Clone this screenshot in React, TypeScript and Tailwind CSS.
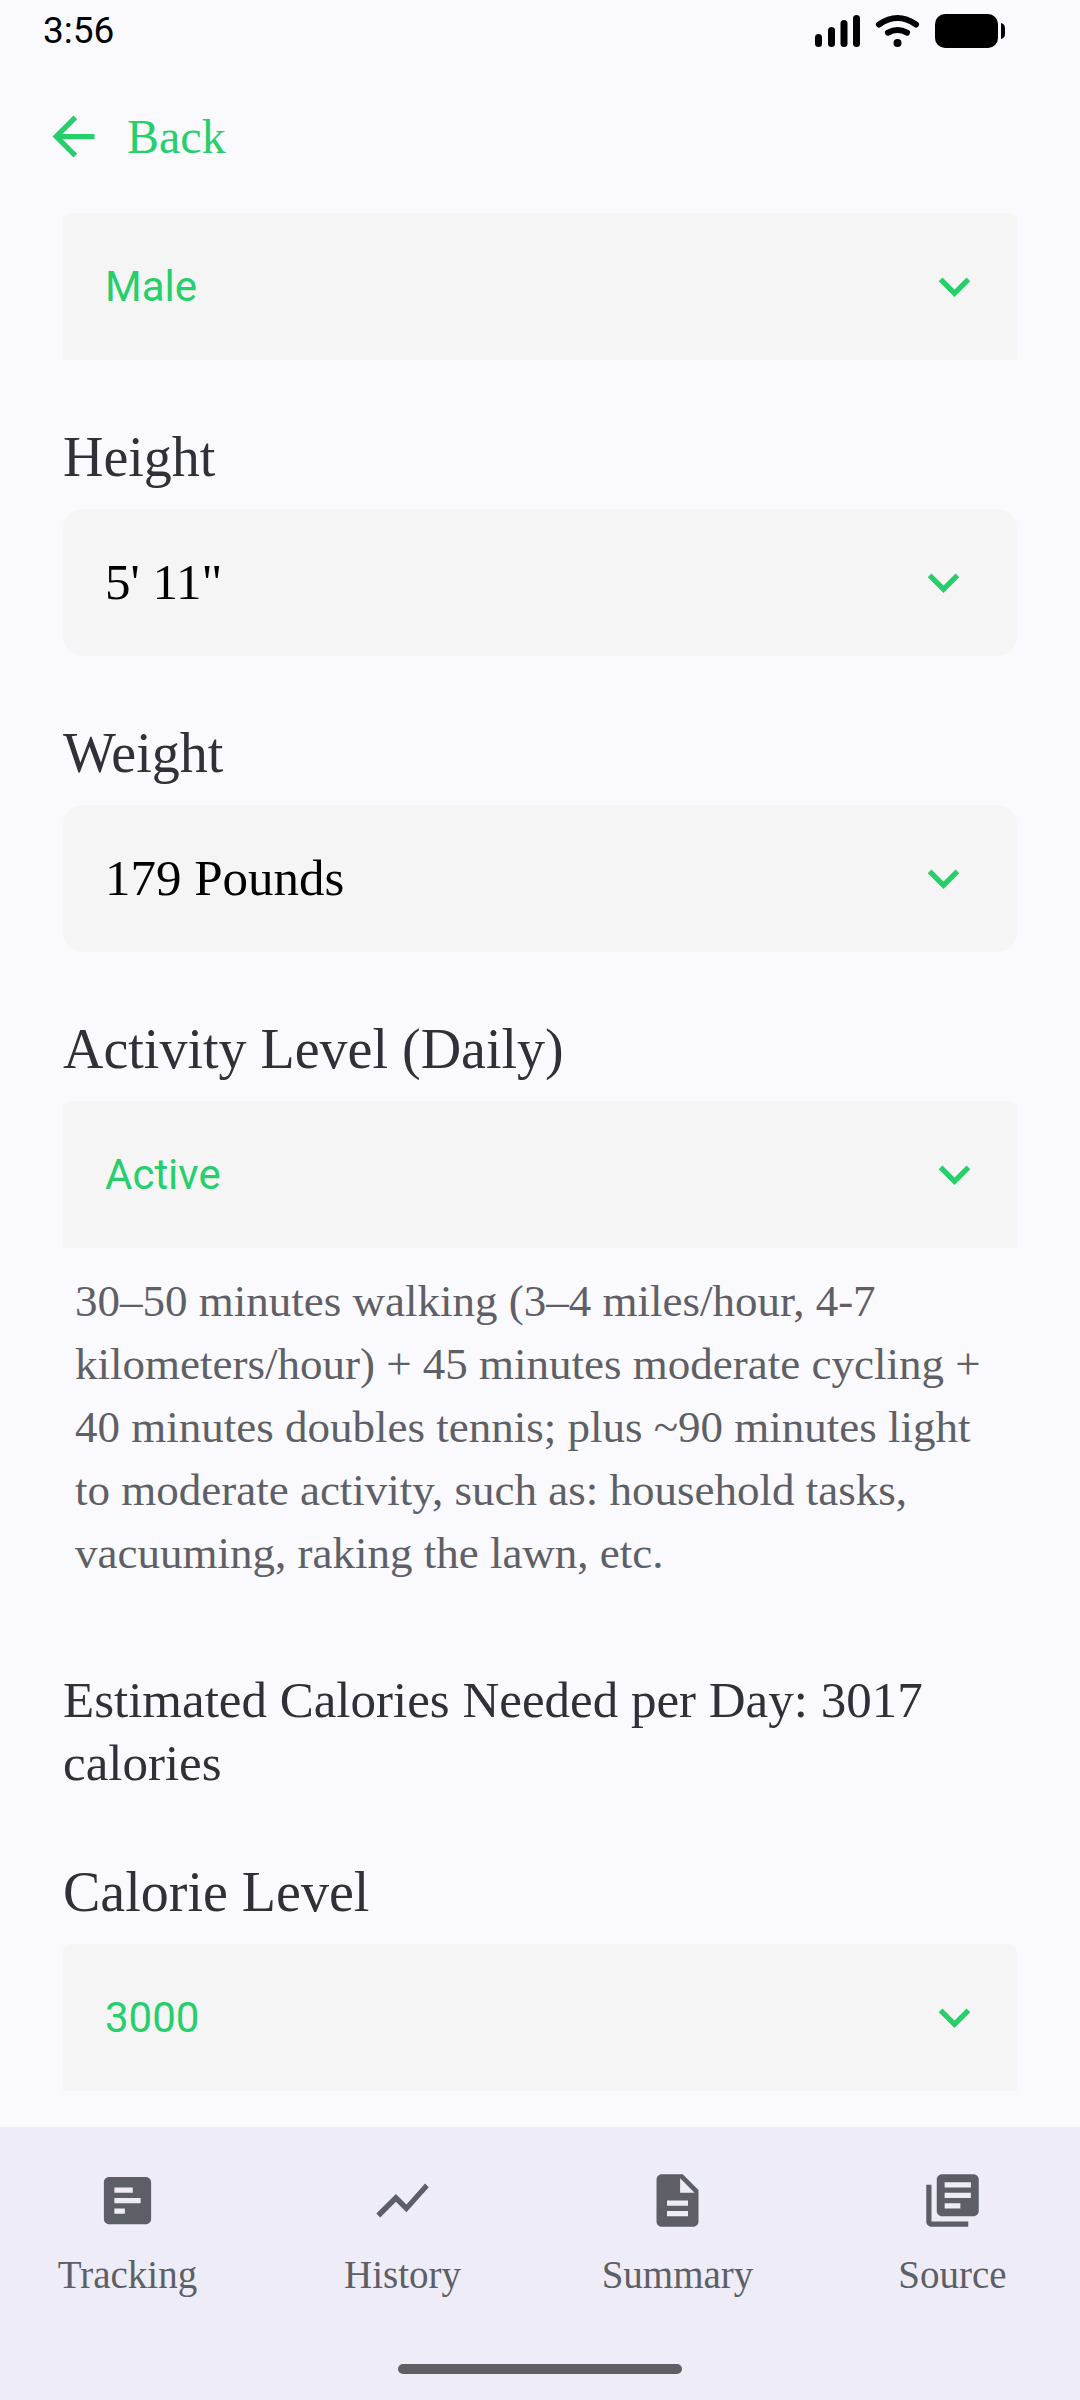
import { useId, useState } from 'react'
import {
  MdArrowBack,
  MdExpandMore,
  MdShowChart,
  MdDescription,
  MdLibraryBooks
} from 'react-icons/md'
import clsx from 'clsx'

const StatusBar = () => {
  return (
    <div className="flex h-[62px] items-center justify-between pl-[43px] pr-[74px] font-['Roboto',sans-serif] text-[37px] leading-[44px] text-black">
      <span>3:56</span>
      <svg width="192" height="34" viewBox="0 0 192 34" aria-hidden="true">
        <rect x="1" y="20" width="7" height="13" rx="3.5" />
        <rect x="14" y="13" width="7" height="20" rx="3.5" />
        <rect x="26.5" y="6" width="7" height="27" rx="3.5" />
        <rect x="39" y="1" width="7" height="32" rx="3.5" />
        <g fill="none" stroke="black" strokeWidth="6" strokeLinecap="round">
          <path d="M65 10.5Q83.500-2.500 102 10.500" />
          <path d="M74 18.700Q83.500 13.300 93 18.700" />
        </g>
        <circle cx="83.500" cy="29" r="4" />
        <rect x="121" y="0" width="63" height="34" rx="10" />
        <path d="M187 9q4 1 4 5v6q0 4-4 5z" />
      </svg>
    </div>
  )
}

interface SelectFieldProps {
  name: string
  label?: string
  value: string
  options: string[]
  outlined?: boolean
}

const SelectField = ({ name, label, value, options, outlined = false }: SelectFieldProps) => {
  const id = useId()
  const [selected, setSelected] = useState(value)

  return (
    <div>
      {label && (
        <label htmlFor={id} className="block pb-5 text-[56px] leading-[63px] text-[#303038]">
          {label}
        </label>
      )}
      <div className="grid items-center">
        <select
          id={id}
          name={name}
          aria-label={label ? undefined : name}
          value={selected}
          onChange={(e) => setSelected(e.target.value)}
          className={clsx(
            'col-start-1 row-start-1 h-[147px] w-full appearance-none bg-[#f5f5f5] px-[42px] outline-none',
            outlined
              ? 'rounded-[20px] text-[51px] text-black'
              : "rounded-t-[8px] font-['Roboto',sans-serif] text-[42px] text-[#27cf6b]"
          )}
        >
          {options.map((option) => (
            <option key={option}>{option}</option>
          ))}
        </select>
        <MdExpandMore
          size={63}
          className={clsx(
            'pointer-events-none col-start-1 row-start-1 justify-self-end text-[#27cf6b]',
            outlined ? 'mr-[42px]' : 'mr-[31px]'
          )}
        />
      </div>
    </div>
  )
}

const TrackingIcon = () => (
  <svg width="63" height="63" viewBox="0 0 24 24" fill="currentColor" aria-hidden="true">
    <path d="M19 3H5c-1.100 0-2 .9-2 2v14c0 1.100.9 2 2 2h14c1.100 0 2-.9 2-2V5c0-1.100-.9-2-2-2zM11 17H7v-2h4v2zm6-4H7v-2h10v2zm-3-4H7V7h7v2z" />
  </svg>
)

const tabs = [
  { label: 'Tracking', icon: <TrackingIcon /> },
  { label: 'History', icon: <MdShowChart size={63} /> },
  { label: 'Summary', icon: <MdDescription size={63} /> },
  { label: 'Source', icon: <MdLibraryBooks size={63} /> }
]

const BottomNav = () => {
  return (
    <nav className="mt-auto bg-[#eeecf7] pb-[26px] text-[#5d5f67]">
      <div className="grid grid-cols-4 gap-5 pt-[42px]">
        {tabs.map((tab) => (
          <button key={tab.label} className="flex flex-col items-center gap-[22px]">
            {tab.icon}
            <span className="text-[39px] leading-[42px]">{tab.label}</span>
          </button>
        ))}
      </div>
      <div className="mx-auto mt-[68px] h-[10px] w-[284px] rounded-full bg-[#605f64]" />
    </nav>
  )
}

const App = () => {
  return (
    <div className="flex min-h-screen flex-col bg-[#f9f9fe] font-['Liberation_Serif',serif]">
      <StatusBar />

      <header className="px-[42px] pt-[43px]">
        <button className="flex items-center gap-[22px] text-[48px] leading-[63px] text-[#27cf6b]">
          <MdArrowBack size={63} />
          Back
        </button>
      </header>

      <main className="flex flex-col gap-[66px] px-[63px] pb-9 pt-[45px]">
        <SelectField name="Gender" value="Male" options={['Male', 'Female']} />
        <SelectField
          name="height"
          label="Height"
          value={'5\' 11"'}
          options={['5\' 10"', '5\' 11"', '6\' 0"']}
          outlined
        />
        <SelectField
          name="weight"
          label="Weight"
          value="179 Pounds"
          options={['178 Pounds', '179 Pounds', '180 Pounds']}
          outlined
        />
        <div>
          <SelectField
            name="activity"
            label="Activity Level (Daily)"
            value="Active"
            options={['Inactive', 'Low Active', 'Active', 'Very Active']}
          />
          <p className="pb-[18px] pl-3 pr-6 pt-[22px] text-[45px] leading-[63px] text-[#5f5f66]">
            30–50 minutes walking (3–4 miles/hour, 4-7 kilometers/hour) + 45 minutes moderate
            cycling + 40 minutes doubles tennis; plus ~90 minutes light to moderate activity, such
            as: household tasks, vacuuming, raking the lawn, etc.
          </p>
        </div>
        <p className="text-[51px] leading-[63px] text-[#303038]">
          Estimated Calories Needed per Day: 3017 calories
        </p>
        <SelectField
          name="calories"
          label="Calorie Level"
          value="3000"
          options={['2800', '3000', '3200']}
        />
      </main>

      <BottomNav />
    </div>
  )
}

export default App
